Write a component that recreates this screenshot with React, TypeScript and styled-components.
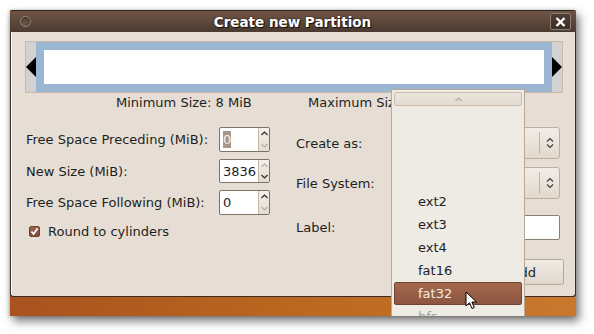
import styled, { createGlobalStyle } from "styled-components";

const Global = createGlobalStyle`
  html, body {
    margin: 0;
    padding: 0;
    background: #ffffff;
    font-family: "DejaVu Sans", "Liberation Sans", sans-serif;
    font-size: 13px;
    color: #1e1e1e;
  }
`;

const Page = styled.div`
  width: 594px;
  height: 334px;
  padding: 10px 0 0 10px;
  box-sizing: border-box;
  overflow: hidden;
`;

const Shot = styled.div`
  position: relative;
  width: 566px;
  height: 306px;
  overflow: hidden;
  background: linear-gradient(90deg, #a9521f 0%, #b9651f 45%, #c8792e 100%);
  box-shadow: 3px 5px 9px rgba(0, 0, 0, 0.55), -1px 0 3px rgba(0, 0, 0, 0.2);
`;

const Window = styled.div`
  height: 287px;
  display: flex;
  flex-direction: column;
  border-radius: 4px 4px 3px 3px;
  overflow: hidden;
  background: #3a2d26;
`;

const TitleBar = styled.div`
  height: 22px;
  flex: none;
  display: flex;
  align-items: center;
  padding: 0 5px 0 10px;
  box-sizing: border-box;
  border-top: 1px solid #2e231d;
  background: linear-gradient(180deg, #705446 0%, #5c463a 55%, #4b3a31 100%);
`;

const CircleButton = styled.div`
  width: 9px;
  height: 9px;
  border-radius: 50%;
  border: 1px solid #9a8a80;
  background: radial-gradient(circle at 40% 70%, #6a5548, #4a3a31);
  box-shadow: inset 0 1px 1px rgba(0, 0, 0, 0.4);
`;

const Title = styled.div`
  flex: 1;
  text-align: center;
  color: #ffffff;
  font-weight: bold;
  font-size: 13.5px;
  text-shadow: 1px 1px 1px #1a120e, 0 0 2px #2a1d16;
  padding-left: 4px;
`;

const CloseButton = styled.div`
  width: 19px;
  height: 15px;
  border: 1px solid #8c7c72;
  border-radius: 2px;
  background: linear-gradient(180deg, #4e3d34, #3c2f28);
  display: flex;
  align-items: center;
  justify-content: center;
`;

const Body = styled.div`
  flex: 1;
  margin: 0 1px 1px 1px;
  padding: 9px 13px 0 13px;
  background: #e6ded4;
  border-left: 1px solid #ffffff;
  border-radius: 0 0 3px 3px;
  display: flex;
  flex-direction: column;
`;

const SliderFrame = styled.div`
  width: 538px;
  height: 52px;
  box-sizing: border-box;
  border: 1px solid #c9b9a6;
  display: flex;
`;

const SliderEnd = styled.div`
  width: 10px;
  background: #d2d2d2;
  display: flex;
  align-items: center;
  justify-content: center;
`;

const SliderBar = styled.div`
  flex: 1;
  border: 8px solid #9bb6d1;
  background: #ffffff;
`;

const SizesRow = styled.div`
  height: 16px;
  margin-top: 2px;
  line-height: 16px;
  display: flex;
  padding-left: 91px;
`;

const SizeLabel = styled.span<{ $width?: number }>`
  width: ${(p) => (p.$width ? `${p.$width}px` : "auto")};
  white-space: nowrap;
`;

const Columns = styled.div`
  margin-top: 16px;
  display: flex;
  padding-left: 1px;
`;

const LeftCol = styled.div`
  width: 244px;
  display: flex;
  flex-direction: column;
`;

const RightCol = styled.div`
  margin-left: 26px;
  width: 264px;
  display: flex;
  flex-direction: column;
`;

const FieldRow = styled.div<{ $h: number; $top: number }>`
  height: ${(p) => p.$h}px;
  margin-top: ${(p) => p.$top}px;
  display: flex;
  align-items: center;
`;

const FieldLabel = styled.span`
  flex: 1;
  white-space: nowrap;
`;

const Spin = styled.div`
  width: 51px;
  height: 100%;
  box-sizing: border-box;
  border: 1px solid #7d7266;
  border-radius: 2px;
  background: #ffffff;
  display: flex;
  overflow: hidden;
`;

const SpinText = styled.div`
  flex: 1;
  padding-left: 3px;
  display: flex;
  align-items: center;
`;

const Selected = styled.span`
  background: #a7978a;
  color: #f4efe9;
  padding: 1px 0;
`;

const SpinButtons = styled.div`
  width: 10px;
  border-left: 1px solid #c4b7a8;
  background: linear-gradient(180deg, #f3efea, #e4dcd2);
  display: flex;
  flex-direction: column;
`;

const SpinHalf = styled.div`
  flex: 1;
  display: flex;
  align-items: center;
  justify-content: center;
`;

const CheckRow = styled.div`
  height: 20px;
  margin-top: 6px;
  display: flex;
  align-items: center;
  padding-left: 3px;
  gap: 8px;
`;

const CheckBox = styled.div`
  width: 11px;
  height: 11px;
  box-sizing: border-box;
  border: 1px solid #6c4433;
  border-radius: 2px;
  background: linear-gradient(180deg, #9a6550, #7d4d3a);
  display: flex;
  align-items: center;
  justify-content: center;
`;

const Combo = styled.div`
  width: 164px;
  height: 100%;
  box-sizing: border-box;
  border: 1px solid #bcae9e;
  border-radius: 3px;
  background: linear-gradient(180deg, #f1ece6, #e2d9ce);
  display: flex;
  justify-content: flex-end;
  align-items: center;
`;

const ComboArrow = styled.div`
  width: 19px;
  height: 22px;
  border-left: 1px solid #c0b3a4;
  display: flex;
  align-items: center;
  justify-content: center;
`;

const TextEntry = styled.div`
  width: 164px;
  height: 100%;
  box-sizing: border-box;
  border: 1px solid #8a7f73;
  border-radius: 2px;
  background: #ffffff;
`;

const ActionRow = styled.div`
  margin-top: 18px;
  margin-right: -2px;
  height: 26px;
  display: flex;
  justify-content: flex-end;
`;

const Button = styled.div<{ $width: number }>`
  width: ${(p) => p.$width}px;
  box-sizing: border-box;
  border: 1px solid #b7a999;
  border-radius: 3px;
  background: linear-gradient(180deg, #f0ebe5, #e1d8cd);
  display: flex;
  align-items: center;
  justify-content: center;
`;

const Desktop = styled.div`
  flex: 1;
`;

const Popup = styled.div`
  position: absolute;
  left: 381px;
  top: 79px;
  width: 134px;
  height: 260px;
  box-sizing: border-box;
  border: 1px solid #b9aa98;
  background: #eeeae4;
  padding: 2px 2px 0 2px;
`;

const ScrollButton = styled.div`
  height: 14px;
  box-sizing: border-box;
  border: 1px solid #cbbeaf;
  border-radius: 2px;
  background: linear-gradient(180deg, #ebe5de, #e3dbd1);
  display: flex;
  align-items: center;
  justify-content: center;
`;

const MenuList = styled.div`
  margin-top: 84px;
  display: flex;
  flex-direction: column;
`;

const MenuItem = styled.div<{ $active?: boolean; $disabled?: boolean }>`
  position: relative;
  height: 23px;
  box-sizing: border-box;
  padding-left: 23px;
  display: flex;
  align-items: center;
  border-radius: 2px;
  color: ${(p) => (p.$active ? "#f6ebe4" : p.$disabled ? "#a39d97" : "#1e1e1e")};
  background: ${(p) =>
    p.$active ? "linear-gradient(180deg, #a5684f, #8c5640)" : "transparent"};
  border: 1px solid ${(p) => (p.$active ? "#6f4331" : "transparent")};
`;

const Cursor = styled.svg`
  position: absolute;
  left: 70px;
  top: 8px;
`;

function Chevron({ up, color }: { up: boolean; color: string }) {
  return (
    <svg width="7" height="5" viewBox="0 0 7 5">
      <polyline
        points={up ? "0.5,4 3.5,1 6.5,4" : "0.5,1 3.5,4 6.5,1"}
        fill="none"
        stroke={color}
        strokeWidth="1.2"
      />
    </svg>
  );
}

function SpinBox({
  value,
  upOn,
  downOn,
  selected,
}: {
  value: string;
  upOn: boolean;
  downOn: boolean;
  selected?: boolean;
}) {
  return (
    <Spin>
      <SpinText>{selected ? <Selected>{value}</Selected> : value}</SpinText>
      <SpinButtons>
        <SpinHalf>
          <Chevron up color={upOn ? "#2c2c2c" : "#b5aea6"} />
        </SpinHalf>
        <SpinHalf>
          <Chevron up={false} color={downOn ? "#2c2c2c" : "#b5aea6"} />
        </SpinHalf>
      </SpinButtons>
    </Spin>
  );
}

function ComboBox() {
  return (
    <Combo>
      <ComboArrow>
        <svg width="8" height="12" viewBox="0 0 8 12">
          <polyline points="1,4.5 4,1.5 7,4.5" fill="none" stroke="#3a3a3a" strokeWidth="1.1" />
          <polyline points="1,7.5 4,10.5 7,7.5" fill="none" stroke="#3a3a3a" strokeWidth="1.1" />
        </svg>
      </ComboArrow>
    </Combo>
  );
}

const fileSystems = ["ext2", "ext3", "ext4", "fat16", "fat32", "hfs"];

export default function App() {
  return (
    <Page>
      <Global />
      <Shot>
        <Window>
          <TitleBar>
            <CircleButton />
            <Title>Create new Partition</Title>
            <CloseButton>
              <svg width="11" height="10" viewBox="0 0 11 10">
                <path d="M1.5 1 L9.5 9 M9.5 1 L1.5 9" stroke="#ffffff" strokeWidth="2.4" />
              </svg>
            </CloseButton>
          </TitleBar>
          <Body>
            <SliderFrame>
              <SliderEnd>
                <svg width="10" height="20" viewBox="0 0 10 20">
                  <polygon points="10,0 0,10 10,20" fill="#000000" />
                </svg>
              </SliderEnd>
              <SliderBar />
              <SliderEnd>
                <svg width="10" height="20" viewBox="0 0 10 20">
                  <polygon points="0,0 10,10 0,20" fill="#000000" />
                </svg>
              </SliderEnd>
            </SliderFrame>
            <SizesRow>
              <SizeLabel $width={192}>Minimum Size: 8 MiB</SizeLabel>
              <SizeLabel>Maximum Size: 3836 MiB</SizeLabel>
            </SizesRow>
            <Columns>
              <LeftCol>
                <FieldRow $h={25} $top={0}>
                  <FieldLabel>Free Space Preceding (MiB):</FieldLabel>
                  <SpinBox value="0" upOn downOn={false} selected />
                </FieldRow>
                <FieldRow $h={24} $top={7}>
                  <FieldLabel>New Size (MiB):</FieldLabel>
                  <SpinBox value="3836" upOn={false} downOn />
                </FieldRow>
                <FieldRow $h={25} $top={7}>
                  <FieldLabel>Free Space Following (MiB):</FieldLabel>
                  <SpinBox value="0" upOn downOn={false} />
                </FieldRow>
                <CheckRow>
                  <CheckBox>
                    <svg width="9" height="9" viewBox="0 0 9 9">
                      <polyline points="1.5,4.5 3.5,7 7.5,1.5" fill="none" stroke="#ffffff" strokeWidth="1.8" />
                    </svg>
                  </CheckBox>
                  Round to cylinders
                </CheckRow>
              </LeftCol>
              <RightCol>
                <FieldRow $h={32} $top={0}>
                  <FieldLabel>Create as:</FieldLabel>
                  <ComboBox />
                </FieldRow>
                <FieldRow $h={32} $top={8}>
                  <FieldLabel>File System:</FieldLabel>
                  <ComboBox />
                </FieldRow>
                <FieldRow $h={25} $top={16}>
                  <FieldLabel>Label:</FieldLabel>
                  <TextEntry />
                </FieldRow>
              </RightCol>
            </Columns>
            <ActionRow>
              <Button $width={81}>Add</Button>
            </ActionRow>
          </Body>
        </Window>
        <Desktop />
        <Popup>
          <ScrollButton>
            <Chevron up color="#b3aaa1" />
          </ScrollButton>
          <MenuList>
            {fileSystems.map((fs) => (
              <MenuItem key={fs} $active={fs === "fat32"} $disabled={fs === "hfs"}>
                {fs}
                {fs === "fat32" && (
                  <Cursor width="13" height="19" viewBox="0 0 13 19">
                    <path
                      d="M1 1 L1 15 L4.5 11.8 L7 17.5 L9.3 16.5 L6.9 11 L11.5 11 Z"
                      fill="#ffffff"
                      stroke="#000000"
                      strokeWidth="1"
                      strokeLinejoin="round"
                    />
                  </Cursor>
                )}
              </MenuItem>
            ))}
          </MenuList>
        </Popup>
      </Shot>
    </Page>
  );
}
